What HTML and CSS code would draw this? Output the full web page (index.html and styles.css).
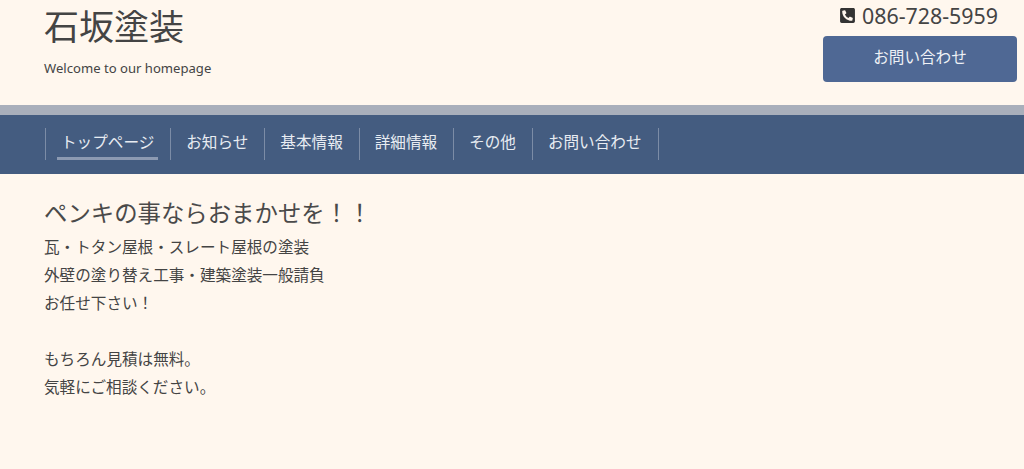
FILE: index.html
```html
<!DOCTYPE html>
<html lang="ja">
<head>
    <meta charset="UTF-8">
    <meta name="viewport" content="width=device-width, initial-scale=1.0">
    <title>石坂塗装</title>
    <link rel="stylesheet" href="styles.css">
</head>
<body>
    <header class="header">
        <div class="brand">
            <h1>石坂塗装</h1>
            <p>Welcome to our homepage</p>
        </div>
        <div class="contact">
            <div class="tel">
                <svg class="tel-icon" viewBox="0 0 448 512"><path d="M400 32H48C21.49 32 0 53.49 0 80v352c0 26.51 21.49 48 48 48h352c26.51 0 48-21.49 48-48V80c0-26.51-21.49-48-48-48zm-16.39 307.37l-15 65A15 15 0 0 1 354 416C194 416 64 286.29 64 126a15.7 15.7 0 0 1 11.63-14.61l65-15A18.23 18.23 0 0 1 144 96a16.27 16.27 0 0 1 13.79 9.09l30 70A17.9 17.9 0 0 1 189 181a17 17 0 0 1-5.5 11.61l-37.89 31a231.91 231.91 0 0 0 110.78 110.78l31-37.89A17 17 0 0 1 299 291a17.85 17.85 0 0 1 5.91 1.21l70 30A16.25 16.25 0 0 1 384 336a17.41 17.41 0 0 1-.39 3.37z"/></svg>
                <span>086-728-5959</span>
            </div>
            <a class="contact-btn" href="#">お問い合わせ</a>
        </div>
    </header>

    <nav class="nav">
        <ul>
            <li class="active"><a href="#">トップページ</a></li>
            <li><a href="#">お知らせ</a></li>
            <li><a href="#">基本情報</a></li>
            <li><a href="#">詳細情報</a></li>
            <li><a href="#">その他</a></li>
            <li><a href="#">お問い合わせ</a></li>
        </ul>
    </nav>

    <main class="content">
        <h2>ペンキの事ならおまかせを！！</h2>
        <p>瓦・トタン屋根・スレート屋根の塗装<br>外壁の塗り替え工事・建築塗装一般請負<br>お任せ下さい！<br><br>もちろん見積は無料。<br>気軽にご相談ください。</p>
    </main>
</body>
</html>
```

FILE: styles.css
```css
* {
    margin: 0;
    padding: 0;
    box-sizing: border-box;
}

body {
    background-color: #fff7ee;
    color: #444;
    font-family: "Noto Sans", "Noto Sans CJK JP", sans-serif;
    font-size: 15.6px;
}

a {
    color: inherit;
    text-decoration: none;
}

/* header */
.header {
    display: flex;
    justify-content: space-between;
    height: 105px;
    padding: 0 7px 0 44px;
}

.brand h1 {
    margin-top: 3px;
    font-size: 35px;
    font-weight: 400;
    line-height: 48px;
}

.brand p {
    margin-top: 8px;
    font-size: 13.1px;
    line-height: 18px;
}

.contact {
    width: 194px;
}

.tel {
    display: flex;
    justify-content: center;
    align-items: center;
    gap: 7px;
    height: 36px;
    padding-bottom: 6px;
    padding-right: 2px;
    font-size: 21.4px;
}

.tel-icon {
    width: 15px;
    height: 17px;
    fill: #333;
}

.contact-btn {
    display: block;
    height: 46px;
    line-height: 43px;
    text-align: center;
    color: #eef1f6;
    background-color: #4f6894;
    border-radius: 4px;
}

/* nav */
.nav {
    height: 69px;
    padding: 13px 45px 0;
    background-color: #445c80;
    border-top: 10px solid #a9afbb;
}

.nav ul {
    display: flex;
    list-style: none;
}

.nav li {
    height: 32px;
    padding: 0 12px 0 11px;
    border-left: 1px solid #7c8ca6;
}

.nav li:last-child {
    border-right: 1px solid #7c8ca6;
}

.nav a {
    display: block;
    height: 32px;
    padding: 0 4px;
    line-height: 28px;
    color: #e8ecf2;
}

.nav .active a {
    border-bottom: 3px solid #8c9ab2;
}

/* main */
.content {
    padding: 23px 44px 0;
}

.content h2 {
    font-size: 23.4px;
    font-weight: 400;
    line-height: 32px;
    color: #4a4a4a;
}

.content p {
    margin-top: 4px;
    line-height: 28px;
}
```
